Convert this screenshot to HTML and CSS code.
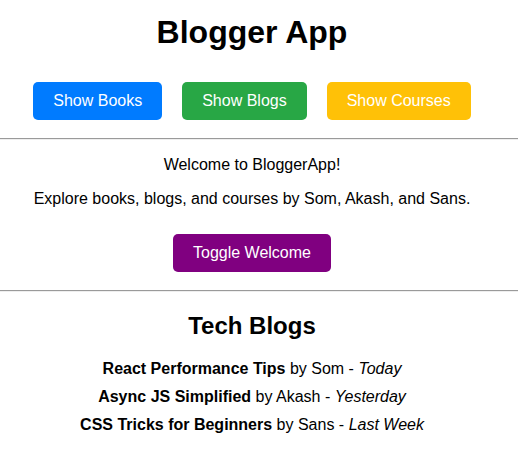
FILE: index.html
```html
<!DOCTYPE html>
<html lang="en">
<head>
<meta charset="utf-8">
<title>Blogger App</title>
<link rel="stylesheet" href="styles.css">
</head>
<body>
<div class="app">
  <header class="header">
    <h1 class="title">Blogger App</h1>
    <nav class="nav">
      <button class="btn btn-blue">Show Books</button>
      <button class="btn btn-green">Show Blogs</button>
      <button class="btn btn-yellow">Show Courses</button>
    </nav>
  </header>
  <hr class="divider">
  <section class="welcome">
    <p class="text">Welcome to BloggerApp!</p>
    <p class="text">Explore books, blogs, and courses by Som, Akash, and Sans.</p>
    <div class="toggle-row">
      <button class="btn btn-purple">Toggle Welcome</button>
    </div>
  </section>
  <hr class="divider">
  <section class="blogs">
    <h2 class="section-title">Tech Blogs</h2>
    <div class="blog-item"><strong>React Performance Tips</strong> by Som - <em>Today</em></div>
    <div class="blog-item"><strong>Async JS Simplified</strong> by Akash - <em>Yesterday</em></div>
    <div class="blog-item"><strong>CSS Tricks for Beginners</strong> by Sans - <em>Last Week</em></div>
  </section>
</div>
</body>
</html>
```

FILE: styles.css
```css
html, body {
  margin: 0;
  padding: 0;
  background: #ffffff;
}

body {
  font-family: "Liberation Sans", Arial, sans-serif;
  font-size: 16px;
  color: #000000;
}

.app {
  text-align: center;
}

.header,
.welcome,
.blogs {
  padding-right: 14px;
}

.title {
  font-size: 32px;
  font-weight: bold;
  margin: 13.5px 0 21.44px;
}

.nav {
  display: flex;
  justify-content: center;
}

.btn {
  font-family: "Liberation Sans", Arial, sans-serif;
  font-size: 16px;
  color: #ffffff;
  border: none;
  border-radius: 5px;
  padding: 10px 20px;
  margin: 10px;
  line-height: 18.4px;
  cursor: pointer;
}

.btn-blue { background: #007bff; }
.btn-green { background: #28a745; }
.btn-yellow { background: #ffc107; }
.btn-purple {
  background: #800080;
  line-height: 17.4px;
}

.divider {
  margin: 8px 0;
  border: none;
  border-top: 1px solid #9a9a9a;
  border-bottom: 1px solid #eeeeee;
  height: 0;
}

.text {
  margin: 16px 0;
}

.toggle-row {
  display: flex;
  justify-content: center;
}

.section-title {
  font-size: 24px;
  font-weight: bold;
  margin: 19.92px 0;
}

.blog-item {
  margin: 10px 0;
}
```
